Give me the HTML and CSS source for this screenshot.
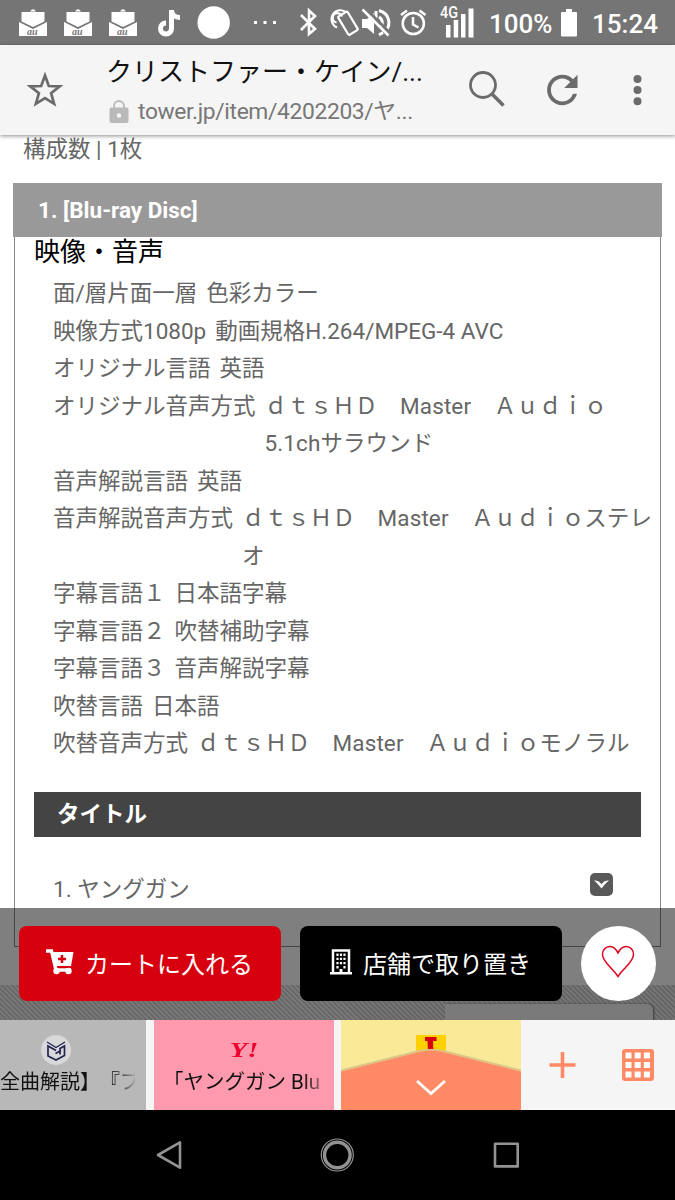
FILE: index.html
```html
<!DOCTYPE html>
<html lang="ja">

<head>
    <meta charset="UTF-8">
    <meta name="viewport" content="width=device-width, initial-scale=1.0">
    <title>クリストファー・ケイン/ヤングガン</title>
    <link rel="stylesheet" href="styles.css">
</head>

<body>

    <!-- status bar -->
    <div class="status">
        <svg class="status-left" width="270" height="45" viewBox="15 0 270 45" fill="#fff">
            <defs>
                <g id="mail">
                    <path d="M11 2.500 Q14-2 17 2.500z" />
                    <path d="M2.500 3h23v9.500l-11.500 5.500L2.500 12.500z" />
                    <path d="M0 13l14 7 14-7V27H0z" />
                    <text x="8" y="25.500" class="au">au</text>
                </g>
            </defs>
            <use href="#mail" x="19" y="9" />
            <use href="#mail" x="64" y="9" />
            <use href="#mail" x="109" y="9" />
            <path d="M171.500 10v18.500a5.500 5.500 0 1 1-5.500-5.500M171.500 10c0 5 3.500 7.500 8.500 7.500" fill="none" stroke="#fff" stroke-width="5" />
            <circle cx="213.700" cy="22.500" r="16.200" />
            <path d="M254 21h3v3h-3zM263.500 21h3v3h-3zM273 21h3v3h-3z" />
        </svg>
        <svg class="status-right" width="180" height="45" viewBox="296 0 180 45" fill="none" stroke="#fff" stroke-width="2.200">
            <path d="M301 15l14 14-6 5V10.500l6 5.500-14 14" stroke-width="2.600" />
            <rect x="342.500" y="12.500" width="11" height="21.500" rx="1.500" transform="rotate(-31 348 23.300)" />
            <path d="M337 27.500a9 9 0 1 1 9.500-15M336.500 22.500a4.700 4.700 0 1 1 5.500-6" stroke-width="2" />
            <path d="M362 19h5l7-6v21l-7-6h-5z" fill="#fff" stroke="none" />
            <path d="M379 10.500c11 3 12 14 7 20M376 11v7M379 17c4 2 4 7 2 10M379 35l4-2.500" stroke-width="3" />
            <path d="M364.500 7.500l26 26" stroke="#757575" stroke-width="3" />
            <path d="M362.500 9.500l26 26" stroke-width="2.500" />
            <circle cx="413.300" cy="23.500" r="10.600" stroke-width="2.500" />
            <path d="M413 17v7.500l5.500 3M401 15l6-4.500M425.500 15l-6-4.500" stroke-width="2.500" />
            <g fill="#fff" stroke="none">
                <path d="M446 25h4.500v12.500H446zM453.700 20h4.500v17.500h-4.500zM461 14h4.500v23.500H461zM468.500 8.500h5v29h-5z" />
                <text x="440" y="18" class="net" textLength="18" lengthAdjust="spacingAndGlyphs">4G</text>
            </g>
        </svg>
        <span class="percent">100%</span>
        <svg width="16" height="28" viewBox="0 0 16 28" fill="#fff">
            <path d="M5 0h6v3h4q1 0 1 1v22.500q0 1-1 1H1q-1 0-1-1V4q0-1 1-1h4z" />
        </svg>
        <span class="clock">15:24</span>
    </div>

    <!-- browser toolbar -->
    <header class="toolbar">
        <svg class="star" width="36" height="36" viewBox="0 0 36 36" fill="none" stroke="#6b6b6b" stroke-width="2.700">
            <path d="M18 3.500l3.800 10.500 10.900.3-8.600 6.900 3 10.600L18 26l-9.100 5.800 3-10.600-8.600-6.900 10.900-.3z" />
        </svg>
        <div class="address">
            <div class="page-title">クリストファー・ケイン/...</div>
            <div class="url">
                <svg width="20" height="24" viewBox="0 0 20 24">
                    <path d="M5 10V6a5 5 0 0 1 10 0v4" fill="none" stroke="#b9b9b9" stroke-width="1.800" />
                    <rect x=".5" y="7.500" width="19" height="15.500" rx="2" fill="#b9b9b9" />
                    <circle cx="10" cy="15.500" r="2.300" fill="#f5f5f5" />
                </svg>
                <span>tower.jp/item/4202203/ヤ...</span>
            </div>
        </div>
        <svg class="tools" width="180" height="90" viewBox="465 45 180 90" fill="#6b6b6b">
            <g fill="none" stroke="#6b6b6b">
                <circle cx="483" cy="85" r="12.500" stroke-width="2.800" />
                <path d="M492 94l11.500 11.500" stroke-width="3.500" />
            </g>
            <path transform="translate(539.500 67.200) scale(1.900)" d="M17.650 6.350A7.958 7.958 0 0 0 12 4c-4.420 0-7.990 3.580-7.990 8s3.570 8 7.990 8c3.730 0 6.840-2.550 7.730-6h-2.080A5.990 5.990 0 0 1 12 18c-3.310 0-6-2.690-6-6s2.690-6 6-6c1.660 0 3.140.690 4.220 1.780L13 11h7V4z" />
            <circle cx="637.500" cy="79" r="4" />
            <circle cx="637.500" cy="90" r="4" />
            <circle cx="637.500" cy="101.200" r="4" />
        </svg>
    </header>

    <!-- page -->
    <main class="page">
        <p class="count">構成数 | 1枚</p>
        <section class="disc">
            <h2>1. [Blu-ray Disc]</h2>
            <h3>映像・音声</h3>
            <div class="spec">
                <dl><dt>面/層片面一層</dt><dd>色彩カラー</dd></dl>
                <dl><dt>映像方式1080p</dt><dd>動画規格H.264/MPEG-4 AVC</dd></dl>
                <dl><dt>オリジナル言語</dt><dd>英語</dd></dl>
                <dl><dt>オリジナル音声方式</dt><dd class="audio">ｄｔｓＨＤ　Master　Ａｕｄｉｏ<br>5.1chサラウンド</dd></dl>
                <dl><dt>音声解説言語</dt><dd>英語</dd></dl>
                <dl><dt>音声解説音声方式</dt><dd class="audio">ｄｔｓＨＤ　Master　Ａｕｄｉｏステレ<br>オ</dd></dl>
                <dl><dt>字幕言語１</dt><dd>日本語字幕</dd></dl>
                <dl><dt>字幕言語２</dt><dd>吹替補助字幕</dd></dl>
                <dl><dt>字幕言語３</dt><dd>音声解説字幕</dd></dl>
                <dl><dt>吹替言語</dt><dd>日本語</dd></dl>
                <dl><dt>吹替音声方式</dt><dd class="audio">ｄｔｓＨＤ　Master　Ａｕｄｉｏモノラル</dd></dl>
            </div>
            <h4>タイトル</h4>
            <div class="track">
                <span>1. ヤングガン</span>
                <svg width="23" height="23" viewBox="0 0 23 23">
                    <rect width="23" height="23" rx="5" fill="#595959" />
                    <path d="M4 7.500c4 0 5 1 7.500 3.500C14 8.500 15 7.500 19 7.500c-3 2-5 5-7.500 8C9 12.500 7 9.500 4 7.500z" fill="#fff" />
                </svg>
            </div>
        </section>
        <div class="hatch">
            <div class="to-top"></div>
        </div>

        <!-- purchase bar over the page -->
        <div class="buy">
            <button class="cart">
                <svg width="28" height="26" viewBox="0 0 28 26">
                    <path d="M0 2h5.500L10 21h15" fill="none" stroke="#fff" stroke-width="3.400" />
                    <path d="M6 3h21.500l-2.500 14H9z" fill="#fff" />
                    <circle cx="10.500" cy="22" r="3.200" fill="#fff" />
                    <circle cx="22.500" cy="22" r="3.200" fill="#fff" />
                    <path d="M16 6v8M12 10h8" stroke="#d7000f" stroke-width="2.500" />
                </svg>
                カートに入れる
            </button>
            <button class="store">
                <svg width="22" height="26" viewBox="0 0 22 26" fill="none" stroke="#fff">
                    <path d="M3 25V1.500h16V25M0 24.300h22" stroke-width="2.500" />
                    <path d="M7.500 4.500v15M11 4.500v12M14.500 4.500v15" stroke-width="2.200" stroke-dasharray="2.400 1.800" />
                    <path d="M11 20v4" stroke-width="3" />
                </svg>
                店舗で取り置き
            </button>
            <button class="like">
                <svg width="34" height="34" viewBox="0 0 34 34" fill="none" stroke="#e0001b" stroke-width="1.500">
                    <path d="M17 9C14.500 4 11.500 2.500 9 2.500 4.500 2.500 1.500 6 1.500 10.500 1.500 18 11 23.500 17 32.500 23 23.500 32.500 18 32.500 10.500 32.500 6 29.500 2.500 25 2.500 22.500 2.500 19.500 4 17 9z" />
                </svg>
            </button>
        </div>
    </main>

    <!-- tabs -->
    <div class="tabs">
        <div class="tab grey">
            <svg width="30" height="30" viewBox="0 0 30 30" fill="none" stroke="#24244f" stroke-width="1.700">
                <circle cx="15" cy="15" r="15" fill="#d9d9dc" stroke="none" />
                <path d="M6 7l9 5.500L24 7" stroke-width="1.300" />
                <path d="M15 15.500L7 11v10l8 4 8.500-4.500V11l-4.500 2.500v6M14.500 18.500l5.500-3" />
            </svg>
            <span>全曲解説】『ブ</span>
        </div>
        <div class="tab pink">
            <b>Y!</b>
            <span>「ヤングガン Blu</span>
        </div>
        <div class="tab current">
            <svg width="180" height="90" viewBox="0 0 180 90">
                <path d="M75 15h30v20H75z" fill="#ffd000" />
                <path d="M84 17h11.500v4H92l.5 12h-5.500l-.5-12H84z" fill="#d7000f" />
                <path d="M0 50.500L78 31Q90 29 102 31L180 50.500" fill="none" stroke="#d8c789" stroke-width="2" />
                <path d="M0 51.500L78 32Q90 29 102 32L180 51.500V90H0z" fill="#ff8a65" />
                <path d="M76 61l14 12.500L104 61" fill="none" stroke="#fff" stroke-width="2.800" />
            </svg>
        </div>
        <svg class="tab-tools" width="110" height="90" viewBox="545 1020 110 90">
            <path d="M562.500 1052v26M549.500 1065h26" stroke="#ff8a65" stroke-width="3.600" />
            <rect x="622" y="1049" width="32" height="32" rx="3" fill="#ff8a65" />
            <path d="M625.500 1055.500h24.500M625.500 1065h24.500M625.500 1074.500h24.500" stroke="#fff" stroke-width="6" stroke-dasharray="6 3.200" />
        </svg>
    </div>

    <!-- android buttons -->
    <div class="nav">
        <svg width="375" height="40" viewBox="150 1135 375 40" fill="none" stroke="#929292" stroke-width="2.600" stroke-linejoin="round">
            <path d="M180 1142.300v25.400L158 1155z" />
            <circle cx="337.300" cy="1155" r="16" stroke-width="1.200" />
            <circle cx="337.300" cy="1155" r="12.800" stroke-width="3.400" />
            <rect x="495" y="1143.700" width="22.700" height="22.700" />
        </svg>
    </div>

</body>
</html>
```

FILE: styles.css
```css
* {
    box-sizing: border-box;
}

body {
    margin: 0;
    width: 675px;
    height: 1200px;
    display: flex;
    flex-direction: column;
    overflow: hidden;
    background: #fff;
    font-family: Roboto, "Noto Sans CJK JP", sans-serif;
    color: #666;
}

h2, h3, h4, p, dl, dd {
    margin: 0;
}

svg {
    display: block;
    flex: none;
}

/* status bar */
.status {
    height: 45px;
    flex: none;
    display: flex;
    align-items: center;
    padding: 0 17px 0 15px;
    background: #757575;
    color: #fff;
    font-size: 26px;
    font-weight: 500;
    white-space: nowrap;
}

.status-right {
    margin-left: 11px;
}

.percent {
    width: 72px;
    margin-left: 13px;
    padding-top: 3px;
}

.clock {
    margin-left: auto;
    padding-top: 3px;
}

.au {
    font: italic bold 10px "Liberation Serif", serif;
    fill: #777;
}

.net {
    font: 500 16px Roboto, sans-serif;
}

/* browser toolbar */
.toolbar {
    height: 90px;
    flex: none;
    display: flex;
    align-items: center;
    padding-left: 27px;
    background: #f5f5f5;
    box-shadow: 0 1px 4px rgba(0, 0, 0, .45);
    z-index: 1;
}

.address {
    width: 359px;
    margin-left: 43px;
    padding-top: 4px;
    white-space: nowrap;
}

.page-title {
    color: #111;
    font-size: 26px;
    line-height: 40px;
}

.url {
    display: flex;
    align-items: center;
    gap: 9px;
    padding-left: 3px;
    color: #777;
    font-size: 22.800px;
    letter-spacing: -.350px;
    line-height: 40px;
}

/* page */
.page {
    height: 885px;
    flex: none;
    position: relative;
    overflow: hidden;
    font-size: 22.500px;
}

.count {
    height: 48px;
    padding-left: 23px;
    line-height: 28px;
}

.disc {
    width: 647px;
    height: 764px;
    margin-left: 14px;
    border: 1.500px solid #888;
    border-top: 0;
}

.disc h2 {
    height: 54px;
    margin: 0 -2px;
    padding-left: 25px;
    background: #999;
    color: #fff;
    font-size: 22.500px;
    line-height: 55px;
}

.disc h3 {
    height: 38px;
    padding-left: 19px;
    color: #000;
    font-size: 26px;
    font-weight: 400;
    line-height: 31px;
}

.spec {
    padding-left: 38px;
    line-height: 37.500px;
    white-space: nowrap;
}

.spec dl {
    display: flex;
    gap: 9px;
}

.spec .audio {
    letter-spacing: .1px;
}

.disc h4 {
    height: 45px;
    margin: 29px 19px 0;
    padding-left: 23px;
    background: #444;
    color: #fff;
    font-size: 22.500px;
    line-height: 44px;
}

.track {
    display: flex;
    justify-content: space-between;
    margin: 36px 47px 0 38px;
    line-height: 33px;
}

.hatch {
    height: 35px;
    margin-top: 38px;
    padding: 19px 22px 0 0;
    background: repeating-linear-gradient(45deg, #ccc 0 1.800px, #eee 1.800px 3.540px);
}

.to-top {
    width: 208px;
    height: 20px;
    margin-left: auto;
    border-radius: 0 6px 0 0;
    background: #f4f4f4;
    box-shadow: 1px 0 2px #777;
}

.buy {
    position: absolute;
    left: 0;
    right: 0;
    bottom: 0;
    height: 112px;
    display: flex;
    gap: 19px;
    padding: 18px 19px;
    background: rgba(0, 0, 0, .5);
}

.buy button {
    width: 262px;
    height: 75px;
    flex: none;
    display: flex;
    align-items: center;
    justify-content: center;
    gap: 11px;
    padding: 0 1px 3px 0;
    border: 0;
    border-radius: 8px;
    color: #fff;
    font: 24px Roboto, "Noto Sans CJK JP", sans-serif;
    white-space: nowrap;
}

.buy .cart {
    background: #d7000f;
}

.buy .store {
    background: #000;
}

.buy .like {
    width: 75px;
    padding-bottom: 6px;
    border-radius: 50%;
    background: #fff;
}

/* tabs */
.tabs {
    height: 90px;
    flex: none;
    display: flex;
    background: #f5f5f5;
}

.tab {
    width: 180px;
    display: flex;
    flex-direction: column;
    align-items: center;
    overflow: hidden;
    color: #111;
    font-size: 20px;
    white-space: nowrap;
}

.tab span {
    padding-top: 2px;
    line-height: 30px;
    text-spacing-trim: space-all;
}

.grey {
    width: 146px;
    padding-top: 15px;
    background: #b8b8b8;
}

.grey svg {
    margin-left: -34px;
}

.grey span {
    width: 135px;
    align-self: flex-start;
    overflow: hidden;
    -webkit-mask: linear-gradient(to right, #000 115px, transparent 137px);
}

.pink {
    margin-left: 8px;
    padding-top: 15px;
    background: #ff9aae;
}

.pink b {
    color: #f0002d;
    font: italic bold 22px/30px "Liberation Serif", serif;
    transform: scaleX(1.3);
}

.pink span {
    width: 160px;
    margin-left: -2px;
    overflow: hidden;
    font-size: 20.500px;
    -webkit-mask: linear-gradient(to right, #000 140px, transparent 168px);
}

.current {
    margin-left: 7px;
    background: #faea98;
}

.tab-tools {
    margin-left: 24px;
}

/* android buttons */
.nav {
    height: 90px;
    flex: none;
    display: flex;
    align-items: center;
    padding-left: 150px;
    background: #000;
}
```
